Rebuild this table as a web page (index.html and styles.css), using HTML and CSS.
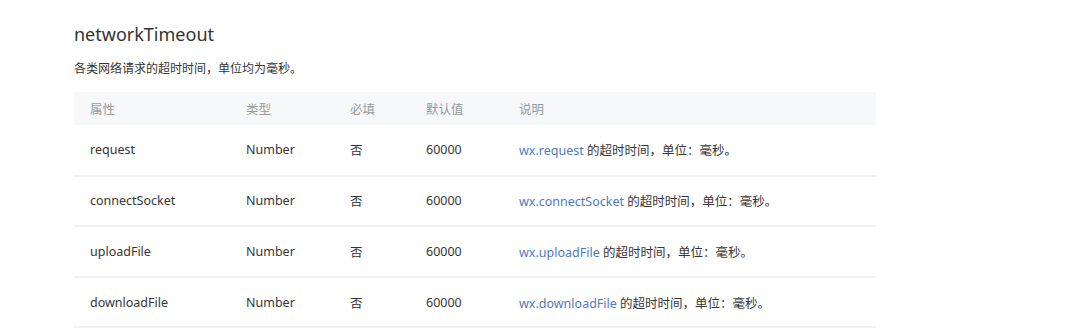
FILE: index.html
```html
<!DOCTYPE html>
<html lang="zh-CN">
<head>
    <meta charset="UTF-8" />
    <title>networkTimeout</title>
    <link rel="stylesheet" href="styles.css">
</head>
<body>
    <div class="content">
        <h2 class="title">networkTimeout</h2>
        <p class="desc">各类网络请求的超时时间，单位均为毫秒。</p>
        <table class="props">
            <thead>
                <tr>
                    <th class="col-name">属性</th>
                    <th class="col-type">类型</th>
                    <th class="col-req">必填</th>
                    <th class="col-def">默认值</th>
                    <th>说明</th>
                </tr>
            </thead>
            <tbody>
                <tr>
                    <td>request</td>
                    <td>Number</td>
                    <td>否</td>
                    <td>60000</td>
                    <td><a href="#">wx.request</a> 的超时时间，单位：毫秒。</td>
                </tr>
                <tr>
                    <td>connectSocket</td>
                    <td>Number</td>
                    <td>否</td>
                    <td>60000</td>
                    <td><a href="#">wx.connectSocket</a> 的超时时间，单位：毫秒。</td>
                </tr>
                <tr>
                    <td>uploadFile</td>
                    <td>Number</td>
                    <td>否</td>
                    <td>60000</td>
                    <td><a href="#">wx.uploadFile</a> 的超时时间，单位：毫秒。</td>
                </tr>
                <tr>
                    <td>downloadFile</td>
                    <td>Number</td>
                    <td>否</td>
                    <td>60000</td>
                    <td><a href="#">wx.downloadFile</a> 的超时时间，单位：毫秒。</td>
                </tr>
            </tbody>
        </table>
    </div>
</body>
</html>
```

FILE: styles.css
```css
* {
    margin: 0;
    padding: 0;
    box-sizing: border-box;
}

body {
    background: #ffffff;
    color: #353535;
    font-family: "Noto Sans", "Noto Sans CJK SC", sans-serif;
}

.content {
    padding: 21px 0 0 74px;
    width: 876px;
}

.title {
    font-size: 18px;
    font-weight: 400;
    line-height: 26px;
    color: #333333;
}

.desc {
    margin-top: 12px;
    font-size: 12px;
    line-height: 20px;
    color: #353535;
}

.props {
    margin-top: 13px;
    width: 802px;
    border-collapse: collapse;
    font-size: 12.5px;
}

.props th {
    background: #f7f8fa;
    color: #999999;
    font-weight: 400;
    text-align: left;
    height: 33px;
    padding: 0 16px;
}

.props td {
    height: 50.6px;
    padding: 0 16px;
    border-bottom: 2px solid #f0f1f3;
    white-space: nowrap;
}

.col-name { width: 156px; }
.col-type { width: 104px; }
.col-req { width: 76px; }
.col-def { width: 93px; }

.props a {
    color: #5079c0;
    text-decoration: none;
}
```
